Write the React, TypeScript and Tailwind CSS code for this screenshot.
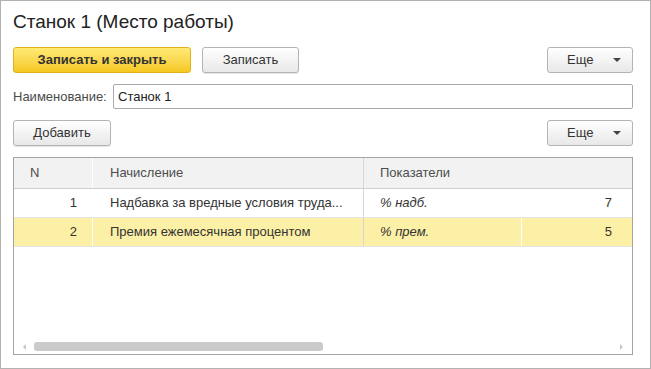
import React from 'react'

const font = "font-['Liberation_Sans',Arial,sans-serif]"

function GrayButton({ label, className }: { label: string; className?: string }) {
    return (
        <button
            className={`h-[26px] rounded-[3px] border border-[#b4b4b4] bg-gradient-to-b from-white to-[#e8e8e8] text-[13px] text-[#333] shadow-[0_1px_0_#e6e6e6] ${className ?? ''}`}
        >
            {label}
        </button>
    )
}

function MoreButton() {
    return (
        <button className="h-[26px] w-[86px] rounded-[3px] border border-[#b4b4b4] bg-gradient-to-b from-white to-[#e8e8e8] flex items-center pl-[19px] pr-[11px] text-[13px] text-[#333]">
            <span>Еще</span>
            <span className="ml-auto w-0 h-0 border-l-[4px] border-r-[4px] border-t-[4px] border-l-transparent border-r-transparent border-t-[#444]" />
        </button>
    )
}

export default function App() {
    return (
        <div
            className={`${font} w-[651px] h-[369px] border border-[#b1b1b1] bg-white flex flex-col pl-[12px] pr-[17px] pt-[10px] pb-[13px] text-[#333]`}
        >
            <h1 className="text-[19px] leading-[22px] text-[#222]">Станок 1 (Место работы)</h1>

            <div className="mt-[14px] flex items-center">
                <button className="h-[26px] w-[178px] rounded-[3px] border border-[#e0b31a] bg-gradient-to-b from-[#ffea73] to-[#f5c71d] text-[13px] font-bold text-[#333]">
                    Записать и закрыть
                </button>
                <GrayButton label="Записать" className="ml-[11px] w-[97px]" />
                <div className="ml-auto">
                    <MoreButton />
                </div>
            </div>

            <div className="mt-[11px] flex items-center">
                <span className="w-[100px] text-[13px] text-[#4a4a4a]">Наименование:</span>
                <div className="flex-1 h-[25px] rounded-[2px] border border-[#aaa] flex items-center pl-[4px] text-[13px] text-[#222]">
                    Станок 1
                </div>
            </div>

            <div className="mt-[11px] flex items-center">
                <GrayButton label="Добавить" className="w-[98px]" />
                <div className="ml-auto">
                    <MoreButton />
                </div>
            </div>

            <div className="mt-[11px] flex-1 border border-[#a3a3a3] flex flex-col text-[13px]">
                <div className="h-[31px] flex bg-[#f2f2f2] border-b border-[#d0d0d0] text-[#4d4d4d]">
                    <div className="w-[79px] border-r border-white pl-[16px] flex items-center">N</div>
                    <div className="w-[271px] border-r border-[#d6d6d6] pl-[17px] flex items-center">Начисление</div>
                    <div className="flex-1 pl-[16px] flex items-center">Показатели</div>
                </div>

                <div className="h-[29px] flex border-b border-[#e4e4e4]">
                    <div className="w-[79px] border-r border-white pr-[15px] flex items-center justify-end">1</div>
                    <div className="w-[271px] border-r border-[#d6d6d6] pl-[17px] flex items-center whitespace-nowrap overflow-hidden">
                        Надбавка за вредные условия труда...
                    </div>
                    <div className="w-[158px] border-r border-white pl-[16px] flex items-center italic">% надб.</div>
                    <div className="flex-1 pr-[20px] flex items-center justify-end">7</div>
                </div>

                <div className="h-[29px] flex border-b border-[#e4e4e4] bg-[#fcf0a6]">
                    <div className="w-[79px] border-r border-white pr-[15px] flex items-center justify-end">2</div>
                    <div className="w-[271px] border-r border-[#d6d6d6] pl-[17px] flex items-center whitespace-nowrap">
                        Премия ежемесячная процентом
                    </div>
                    <div className="w-[158px] border-r border-white pl-[16px] flex items-center italic">% прем.</div>
                    <div className="flex-1 pr-[20px] flex items-center justify-end">5</div>
                </div>

                <div className="flex-1" />

                <div className="h-[9px] mb-[3px] flex items-center">
                    <span className="ml-[9px] w-0 h-0 border-t-[3px] border-b-[3px] border-r-[3px] border-t-transparent border-b-transparent border-r-[#c8c8c8]" />
                    <div className="ml-[8px] w-[289px] h-[9px] rounded-[3px] bg-[#cbcbcb]" />
                    <span className="ml-auto mr-[9px] w-0 h-0 border-t-[3px] border-b-[3px] border-l-[3px] border-t-transparent border-b-transparent border-l-[#c8c8c8]" />
                </div>
            </div>
        </div>
    )
}
